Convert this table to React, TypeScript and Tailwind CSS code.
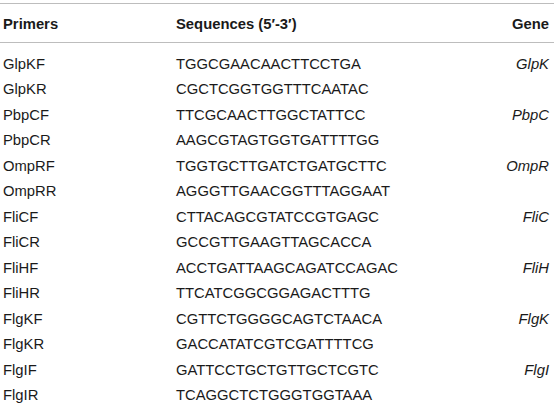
import React from "react";

const rows: [string, string, string][] = [
  ["GlpKF", "TGGCGAACAACTTCCTGA", "GlpK"],
  ["GlpKR", "CGCTCGGTGGTTTCAATAC", ""],
  ["PbpCF", "TTCGCAACTTGGCTATTCC", "PbpC"],
  ["PbpCR", "AAGCGTAGTGGTGATTTTGG", ""],
  ["OmpRF", "TGGTGCTTGATCTGATGCTTC", "OmpR"],
  ["OmpRR", "AGGGTTGAACGGTTTAGGAAT", ""],
  ["FliCF", "CTTACAGCGTATCCGTGAGC", "FliC"],
  ["FliCR", "GCCGTTGAAGTTAGCACCA", ""],
  ["FliHF", "ACCTGATTAAGCAGATCCAGAC", "FliH"],
  ["FliHR", "TTCATCGGCGGAGACTTTG", ""],
  ["FlgKF", "CGTTCTGGGGCAGTCTAACA", "FlgK"],
  ["FlgKR", "GACCATATCGTCGATTTTCG", ""],
  ["FlgIF", "GATTCCTGCTGTTGCTCGTC", "FlgI"],
  ["FlgIR", "TCAGGCTCTGGGTGGTAAA", ""],
];

export default function App() {
  return (
    <div
      className="w-[556px] h-[405px] bg-white text-[#1a1a1a] pt-[3px] overflow-hidden"
      style={{ fontFamily: '"Liberation Sans", Arial, sans-serif' }}
    >
      <div className="w-[554px] border-t-[1.5px] border-b-[1.5px] border-[#bdbdbd] h-[40px] flex items-center pt-[2px] text-[14.8px] font-bold">
        <div className="w-[176px] pl-[3px]">Primers</div>
        <div className="flex-1">Sequences (5′-3′)</div>
        <div className="pr-[5px]">Gene</div>
      </div>
      <div className="flex flex-col pt-[8px]">
        {rows.map(([p, s, g]) => (
          <div key={p} className="h-[25.5px] flex items-center text-[14.8px] w-[554px]">
            <div className="w-[176px] pl-[3px]">{p}</div>
            <div className="flex-1">{s}</div>
            <div className="pr-[5px] italic">{g}</div>
          </div>
        ))}
      </div>
    </div>
  );
}
